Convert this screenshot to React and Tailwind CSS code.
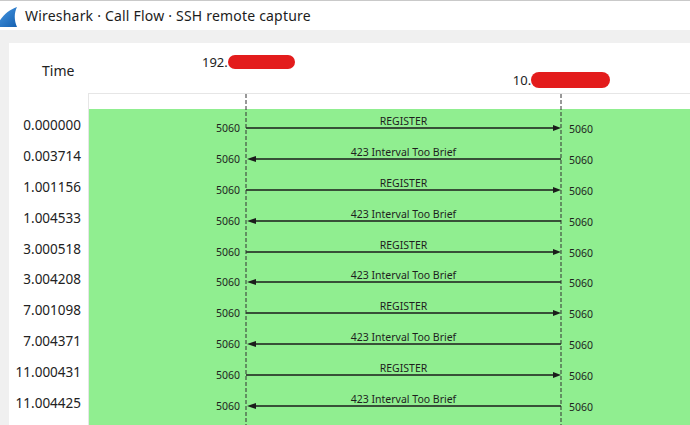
const rows = [
  { t: '0.000000', msg: 'REGISTER', dir: 'right' },
  { t: '0.003714', msg: '423 Interval Too Brief', dir: 'left' },
  { t: '1.001156', msg: 'REGISTER', dir: 'right' },
  { t: '1.004533', msg: '423 Interval Too Brief', dir: 'left' },
  { t: '3.000518', msg: 'REGISTER', dir: 'right' },
  { t: '3.004208', msg: '423 Interval Too Brief', dir: 'left' },
  { t: '7.001098', msg: 'REGISTER', dir: 'right' },
  { t: '7.004371', msg: '423 Interval Too Brief', dir: 'left' },
  { t: '11.000431', msg: 'REGISTER', dir: 'right' },
  { t: '11.004425', msg: '423 Interval Too Brief', dir: 'left' },
];

function SharkFin() {
  return (
    <svg width="18" height="22" viewBox="0 0 18 22" className="shrink-0 mt-[2px]">
      <defs>
        <linearGradient id="fin" x1="0" y1="0" x2="1" y2="1">
          <stop offset="0" stopColor="#4a9be6" />
          <stop offset="1" stopColor="#1560b0" />
        </linearGradient>
      </defs>
      <path d="M-4 21 C1 11 8 4 17 1 C14 7 14 14 17 21 Z" fill="url(#fin)" />
    </svg>
  );
}

function Arrow({ dir }) {
  return (
    <svg width="315" height="8" viewBox="0 0 315 8" className="block -mt-[3px]">
      {dir === 'right' ? (
        <>
          <line x1="0" y1="4" x2="308" y2="4" stroke="#1b1b1b" strokeWidth="1.6" />
          <path d="M307 1 L315 4 L307 7 Z" fill="#1b1b1b" />
        </>
      ) : (
        <>
          <line x1="8" y1="4" x2="315" y2="4" stroke="#1b1b1b" strokeWidth="1.6" />
          <path d="M10 1 L1 4 L10 7 Z" fill="#1b1b1b" />
        </>
      )}
    </svg>
  );
}

function HostLabel({ ip, pill }) {
  return (
    <div className="flex items-center text-[13px] leading-[16px] text-[#222]">
      <span>{ip}</span>
      <span className={`${pill} rounded-full bg-[#e31c1c]`} />
    </div>
  );
}

export default function App() {
  return (
    <div className="w-[690px] h-[425px] overflow-hidden bg-[#f0f0f0] flex flex-col font-['Noto_Sans',sans-serif]">
      {/* title bar */}
      <div className="h-[30px] shrink-0 bg-white border-t border-[#c9c9c9] flex items-center gap-[7px]">
        <SharkFin />
        <span className="text-[14px] text-[#1c1c1c] tracking-[0.2px]">Wireshark · Call Flow · SSH remote capture</span>
      </div>

      <div className="flex-1 flex flex-col pt-[13px] pl-[9px] min-h-0">
        <div className="flex-1 bg-white flex flex-col min-h-0">
          {/* header */}
          <div className="h-[50px] shrink-0 flex items-start">
            <div className="w-[79px] pl-[33px] pt-[19px] text-[14px] leading-[18px] text-[#222]">Time</div>
            <div className="ml-[114px] mt-[11px]">
              <HostLabel ip="192." pill="w-[67px] h-[14px]" />
            </div>
            <div className="ml-[218px] mt-[29px]">
              <HostLabel ip="10." pill="w-[79px] h-[16px]" />
            </div>
          </div>

          {/* body */}
          <div className="flex-1 flex min-h-0">
            <div className="w-[79px] shrink-0 flex flex-col pt-[16px]">
              {rows.map((r) => (
                <div key={r.t} className="h-[30.9px] shrink-0 pt-[8px] pr-[7px] text-right text-[13.5px] leading-[16px] text-[#222]">
                  {r.t}
                </div>
              ))}
            </div>

            <div className="flex-1 relative border-l border-t border-[#e6e6e6] flex flex-col">
              <div className="h-[15px] shrink-0 bg-white" />
              <div className="flex-1 bg-[#90ee90] flex flex-col">
                {rows.map((r) => (
                  <div key={r.t} className="h-[30.9px] shrink-0 flex text-[10.5px] text-[#1e1e1e]">
                    <div className="w-[151px] shrink-0 pt-[13px] leading-[13px] text-right">5060</div>
                    <div className="w-[315px] ml-[6px] shrink-0 flex flex-col pt-[6px]">
                      <div className="leading-[12px] text-center">{r.msg}</div>
                      <Arrow dir={r.dir} />
                    </div>
                    <div className="ml-[8px] pt-[14px] leading-[13px]">5060</div>
                  </div>
                ))}
              </div>

              {/* lifelines */}
              <svg className="absolute top-0 left-[156px] h-full pointer-events-none" width="2" height="330">
                <line x1="1" y1="0" x2="1" y2="400" stroke="#333" strokeWidth="1" strokeDasharray="4 2" />
              </svg>
              <svg className="absolute top-0 left-[471px] h-full pointer-events-none" width="2" height="330">
                <line x1="1" y1="0" x2="1" y2="400" stroke="#333" strokeWidth="1" strokeDasharray="4 2" />
              </svg>
            </div>
          </div>
        </div>
      </div>
    </div>
  );
}
